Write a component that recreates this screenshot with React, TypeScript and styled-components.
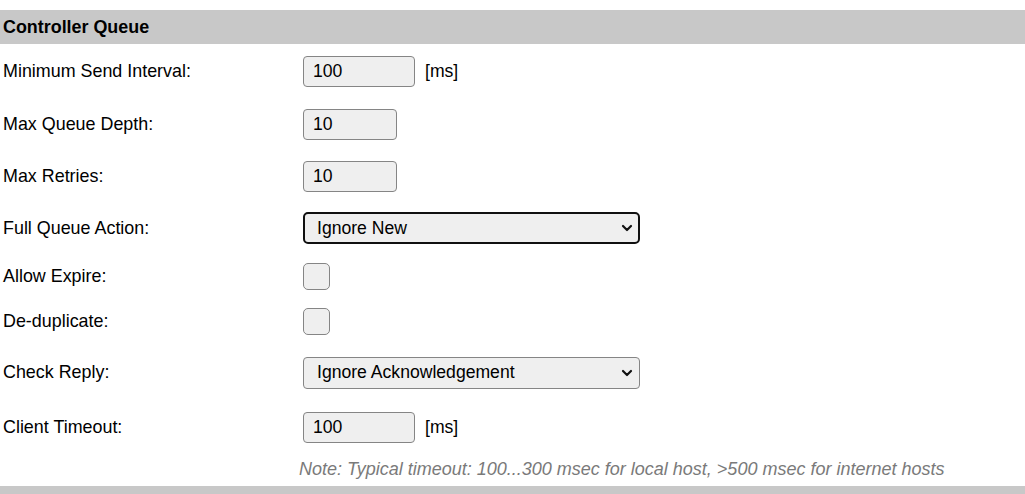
import React from 'react';
import styled, { createGlobalStyle } from 'styled-components';

const GlobalStyle = createGlobalStyle`
  html, body {
    margin: 0;
    padding: 0;
    background: #ffffff;
  }
  body {
    font-family: "Liberation Sans", Arial, sans-serif;
    font-size: 17.9px;
    color: #000000;
  }
`;

const Page = styled.div`
  padding-top: 10px;
`;

const SectionHeader = styled.div`
  height: 34px;
  display: flex;
  align-items: center;
  padding-left: 3px;
  background: #c8c8c8;
  font-weight: bold;
`;

const Row = styled.div<{ $h: number }>`
  display: grid;
  grid-template-columns: 303px 1fr;
  align-items: center;
  height: ${props => props.$h}px;
`;

const Label = styled.div`
  padding-left: 3px;
`;

const Field = styled.div`
  display: flex;
  align-items: center;
  gap: 10px;
`;

const TextInput = styled.input<{ $w: number }>`
  box-sizing: border-box;
  width: ${props => props.$w}px;
  height: 31px;
  padding: 0 9px;
  border: 1px solid #858585;
  border-radius: 4px;
  background: #efefef;
  font-family: inherit;
  font-size: 17.6px;
  color: #000;
  outline: none;
`;

const Unit = styled.span`
  font-size: 17.6px;
`;

const SelectBox = styled.div<{ $focused?: boolean }>`
  position: relative;
  box-sizing: border-box;
  width: 337px;
  height: 32px;
  border: ${props => (props.$focused ? '2px solid #101010' : '1px solid #858585')};
  border-radius: ${props => (props.$focused ? '5px' : '4px')};
  background: #efefef;
  display: flex;
  align-items: center;
  padding-left: ${props => (props.$focused ? '12px' : '13px')};
`;

const SelectText = styled.span`
  font-size: 17.6px;
`;

const Chevron = styled.svg<{ $focused?: boolean }>`
  position: absolute;
  right: ${props => (props.$focused ? '5px' : '6px')};
  top: 50%;
  margin-top: -4px;
`;

const Checkbox = styled.div`
  box-sizing: border-box;
  width: 27px;
  height: 27px;
  border: 1px solid #858585;
  border-radius: 5px;
  background: #efefef;
`;

const Note = styled.div`
  height: 33px;
  display: flex;
  align-items: center;
  padding-left: 299px;
  font-style: italic;
  color: #7a7a7a;
  font-size: 18px;
`;

const FooterBar = styled.div`
  height: 8px;
  background: #c8c8c8;
`;

const Select: React.FC<{ value: string; focused?: boolean }> = ({ value, focused }) => (
  <SelectBox $focused={focused}>
    <SelectText>{value}</SelectText>
    <Chevron $focused={focused} width="12" height="8" viewBox="0 0 12 8">
      <path d="M2 2 L6 6 L10 2" fill="none" stroke="#111" strokeWidth="2.2" strokeLinecap="round" strokeLinejoin="round" />
    </Chevron>
  </SelectBox>
);

export default function App() {
  return (
    <>
      <GlobalStyle />
      <Page>
        <SectionHeader>Controller Queue</SectionHeader>

        <Row $h={54}>
          <Label>Minimum Send Interval:</Label>
          <Field>
            <TextInput $w={112} defaultValue="100" />
            <Unit>[ms]</Unit>
          </Field>
        </Row>

        <Row $h={52}>
          <Label>Max Queue Depth:</Label>
          <Field>
            <TextInput $w={94} defaultValue="10" />
          </Field>
        </Row>

        <Row $h={52}>
          <Label>Max Retries:</Label>
          <Field>
            <TextInput $w={94} defaultValue="10" />
          </Field>
        </Row>

        <Row $h={52}>
          <Label>Full Queue Action:</Label>
          <Field>
            <Select value="Ignore New" focused />
          </Field>
        </Row>

        <Row $h={45}>
          <Label>Allow Expire:</Label>
          <Field>
            <Checkbox />
          </Field>
        </Row>

        <Row $h={45}>
          <Label>De-duplicate:</Label>
          <Field>
            <Checkbox />
          </Field>
        </Row>

        <Row $h={57}>
          <Label>Check Reply:</Label>
          <Field>
            <Select value="Ignore Acknowledgement" />
          </Field>
        </Row>

        <Row $h={52}>
          <Label>Client Timeout:</Label>
          <Field>
            <TextInput $w={112} defaultValue="100" />
            <Unit>[ms]</Unit>
          </Field>
        </Row>

        <Note>Note: Typical timeout: 100...300 msec for local host, &gt;500 msec for internet hosts</Note>
        <FooterBar />
      </Page>
    </>
  );
}
